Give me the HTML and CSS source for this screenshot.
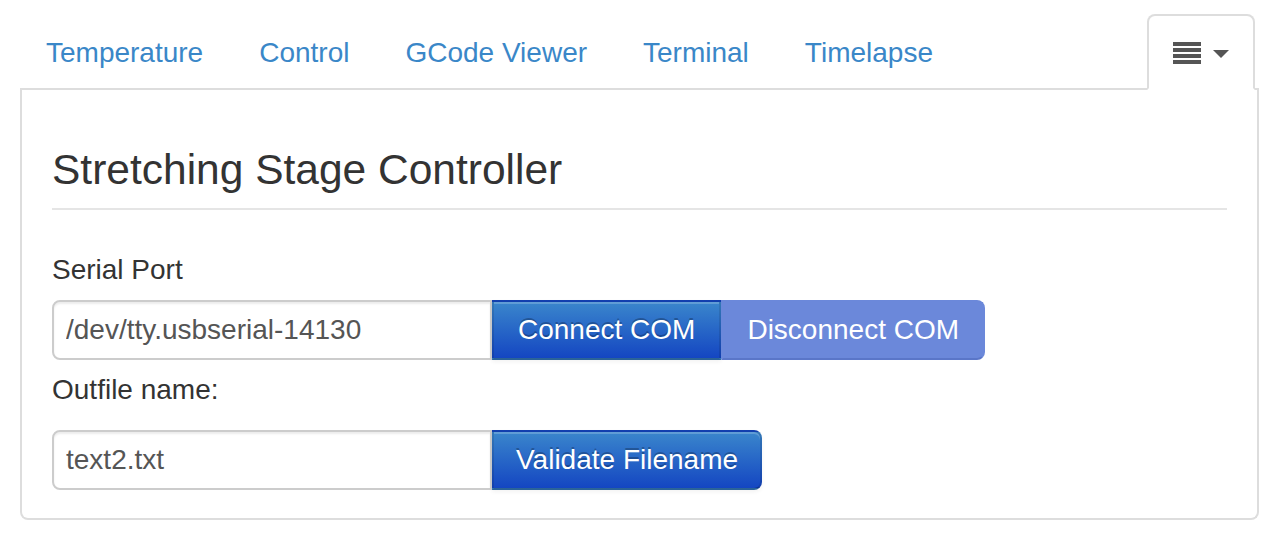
FILE: index.html
```html
<!DOCTYPE html>
<html lang="en">
<head>
<meta charset="utf-8">
<title>Stretching Stage Controller</title>
<link rel="stylesheet" href="styles.css">
</head>
<body>
<div class="wrap">
  <ul class="tabs">
    <li class="tab"><a href="#">Temperature</a></li>
    <li class="tab"><a href="#">Control</a></li>
    <li class="tab"><a href="#">GCode Viewer</a></li>
    <li class="tab"><a href="#">Terminal</a></li>
    <li class="tab"><a href="#">Timelapse</a></li>
    <li class="tab tab-active tab-right">
      <a href="#" class="menu-link">
        <svg class="bars" width="28" height="22" viewBox="0 0 28 22" aria-hidden="true">
          <rect x="0" y="0" width="28" height="4" fill="#555"/>
          <rect x="0" y="6" width="28" height="4" fill="#555"/>
          <rect x="0" y="12" width="28" height="4" fill="#555"/>
          <rect x="0" y="18" width="28" height="4" fill="#555"/>
        </svg>
        <span class="caret"></span>
      </a>
    </li>
  </ul>
  <div class="panel">
    <h2 class="legend">Stretching Stage Controller</h2>
    <label class="field-label">Serial Port</label>
    <div class="input-append">
      <input class="text-input" type="text" value="/dev/tty.usbserial-14130">
      <button class="btn btn-primary">Connect COM</button>
      <button class="btn btn-disabled btn-last">Disconnect COM</button>
    </div>
    <label class="field-label field-label-2">Outfile name:</label>
    <div class="input-append input-append-last">
      <input class="text-input" type="text" value="text2.txt">
      <button class="btn btn-primary btn-last btn-narrow">Validate Filename</button>
    </div>
  </div>
</div>
</body>
</html>
```

FILE: styles.css
```css
* { box-sizing: border-box; }

html, body {
  margin: 0;
  padding: 0;
  background: #ffffff;
}

body {
  font-family: "Liberation Sans", Arial, Helvetica, sans-serif;
  font-size: 28px;
  line-height: 40px;
  color: #333333;
  padding-top: 14px;
}

.wrap {
  margin-left: 20px;
  width: 1239px;
}

.tabs {
  list-style: none;
  margin: 0;
  padding: 0;
  display: flex;
  border-bottom: 2px solid #dddddd;
}

.tab {
  margin-bottom: -2px;
  margin-right: 4px;
}

.tab a {
  display: flex;
  align-items: center;
  padding: 17px 24px 15px;
  line-height: 40px;
  border: 2px solid transparent;
  border-radius: 8px 8px 0 0;
  color: #3a87c8;
  text-decoration: none;
}

.tab-right {
  margin-left: auto;
  margin-right: 4px;
}

.tab-active a {
  background: #ffffff;
  border-color: #dddddd;
  border-bottom-color: transparent;
}

.menu-link {
  height: 76px;
}

.bars {
  display: block;
}

.caret {
  display: block;
  width: 0;
  height: 0;
  margin-left: 12px;
  margin-top: 2px;
  border-top: 8px solid #555555;
  border-left: 8px solid transparent;
  border-right: 8px solid transparent;
}

.panel {
  border: 2px solid #dddddd;
  border-top: none;
  border-radius: 0 0 8px 8px;
  padding: 38px 30px 28px;
}

.legend {
  margin: 0 0 40px;
  padding-top: 4px;
  font-size: 42.5px;
  font-weight: normal;
  line-height: 76px;
  color: #333333;
  border-bottom: 2px solid #e5e5e5;
}

.field-label {
  display: block;
  margin-bottom: 10px;
  font-size: 28px;
  line-height: 40px;
  color: #333333;
}

.field-label-2 {
  margin-bottom: 20px;
}

.input-append {
  display: flex;
  margin-bottom: 10px;
}

.input-append-last {
  margin-bottom: 0;
}

.text-input {
  width: 440px;
  height: 60px;
  padding: 8px 12px;
  font-family: inherit;
  font-size: 28px;
  line-height: 40px;
  color: #555555;
  border: 2px solid #cccccc;
  border-radius: 8px 0 0 8px;
  box-shadow: inset 0 2px 2px rgba(0, 0, 0, 0.075);
  background: #ffffff;
  outline: none;
}

.btn {
  height: 60px;
  padding: 8px 24px;
  font-family: inherit;
  font-size: 28px;
  line-height: 40px;
  color: #ffffff;
  border: 2px solid;
  border-radius: 0;
  margin: 0;
  cursor: pointer;
  white-space: nowrap;
}

.btn-narrow {
  padding: 8px 22px;
}

.btn-primary {
  background: linear-gradient(to bottom, #3a86cc, #1446c2);
  border-color: rgba(0, 0, 0, 0.1) rgba(0, 0, 0, 0.1) rgba(0, 0, 0, 0.25);
  text-shadow: 0 -2px 0 rgba(0, 0, 0, 0.25);
  box-shadow: inset 0 2px 0 rgba(255, 255, 255, 0.2), 0 2px 4px rgba(0, 0, 0, 0.05);
}

.btn-disabled {
  background: #6b88da;
  border-color: #6b88da;
  border-bottom-color: #5a76c8;
  color: #ffffff;
}

.btn-last {
  border-radius: 0 8px 8px 0;
}
```
